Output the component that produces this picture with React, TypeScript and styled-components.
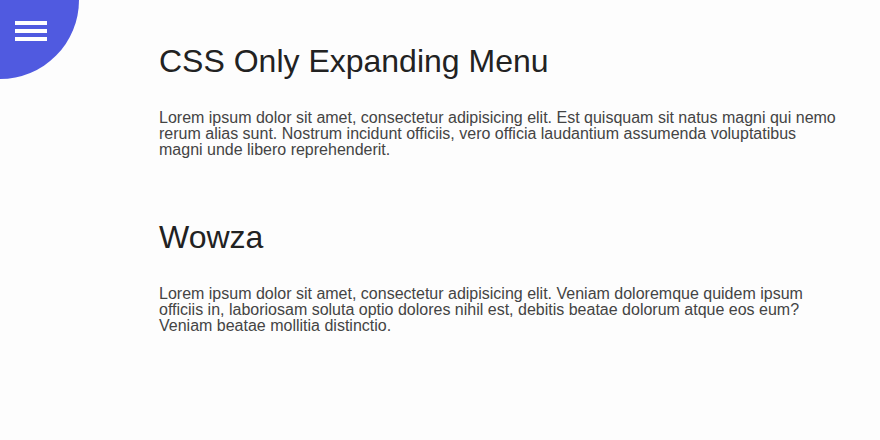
import React from 'react';
import styled, { createGlobalStyle } from 'styled-components';

const Global = createGlobalStyle`
  html, body {
    margin: 0;
    padding: 0;
    background: #fdfdfd;
    font-family: "Liberation Sans", Arial, sans-serif;
  }
`;

const MenuBlob = styled.div`
  position: fixed;
  top: -79px;
  left: -79px;
  width: 158px;
  height: 158px;
  border-radius: 50%;
  background: #505ae0;
`;

const Burger = styled.div`
  position: fixed;
  top: 21px;
  left: 15px;
  width: 32px;
  display: flex;
  flex-direction: column;
  gap: 4px;
  cursor: pointer;
`;

const Bar = styled.span`
  display: block;
  height: 4px;
  background: #fff;
`;

const Main = styled.main`
  padding: 22px 40px 0 159px;
  max-width: 682px;
`;

const Section = styled.section`
  margin-bottom: 61px;
`;

const Title = styled.h1`
  font-size: 32px;
  font-weight: 400;
  color: #222;
  margin: 21px 0 30px;
`;

const Text = styled.p`
  font-size: 16px;
  line-height: 16px;
  color: #444;
  margin: 0;
`;

export default function App() {
  return (
    <>
      <Global />
      <MenuBlob />
      <Burger>
        <Bar />
        <Bar />
        <Bar />
      </Burger>
      <Main>
        <Section>
          <Title>CSS Only Expanding Menu</Title>
          <Text>
            Lorem ipsum dolor sit amet, consectetur adipisicing elit. Est quisquam sit natus magni qui nemo rerum alias sunt. Nostrum incidunt officiis, vero officia laudantium assumenda voluptatibus magni unde libero reprehenderit.
          </Text>
        </Section>
        <Section>
          <Title>Wowza</Title>
          <Text>
            Lorem ipsum dolor sit amet, consectetur adipisicing elit. Veniam doloremque quidem ipsum officiis in, laboriosam soluta optio dolores nihil est, debitis beatae dolorum atque eos eum? Veniam beatae mollitia distinctio.
          </Text>
        </Section>
      </Main>
    </>
  );
}
